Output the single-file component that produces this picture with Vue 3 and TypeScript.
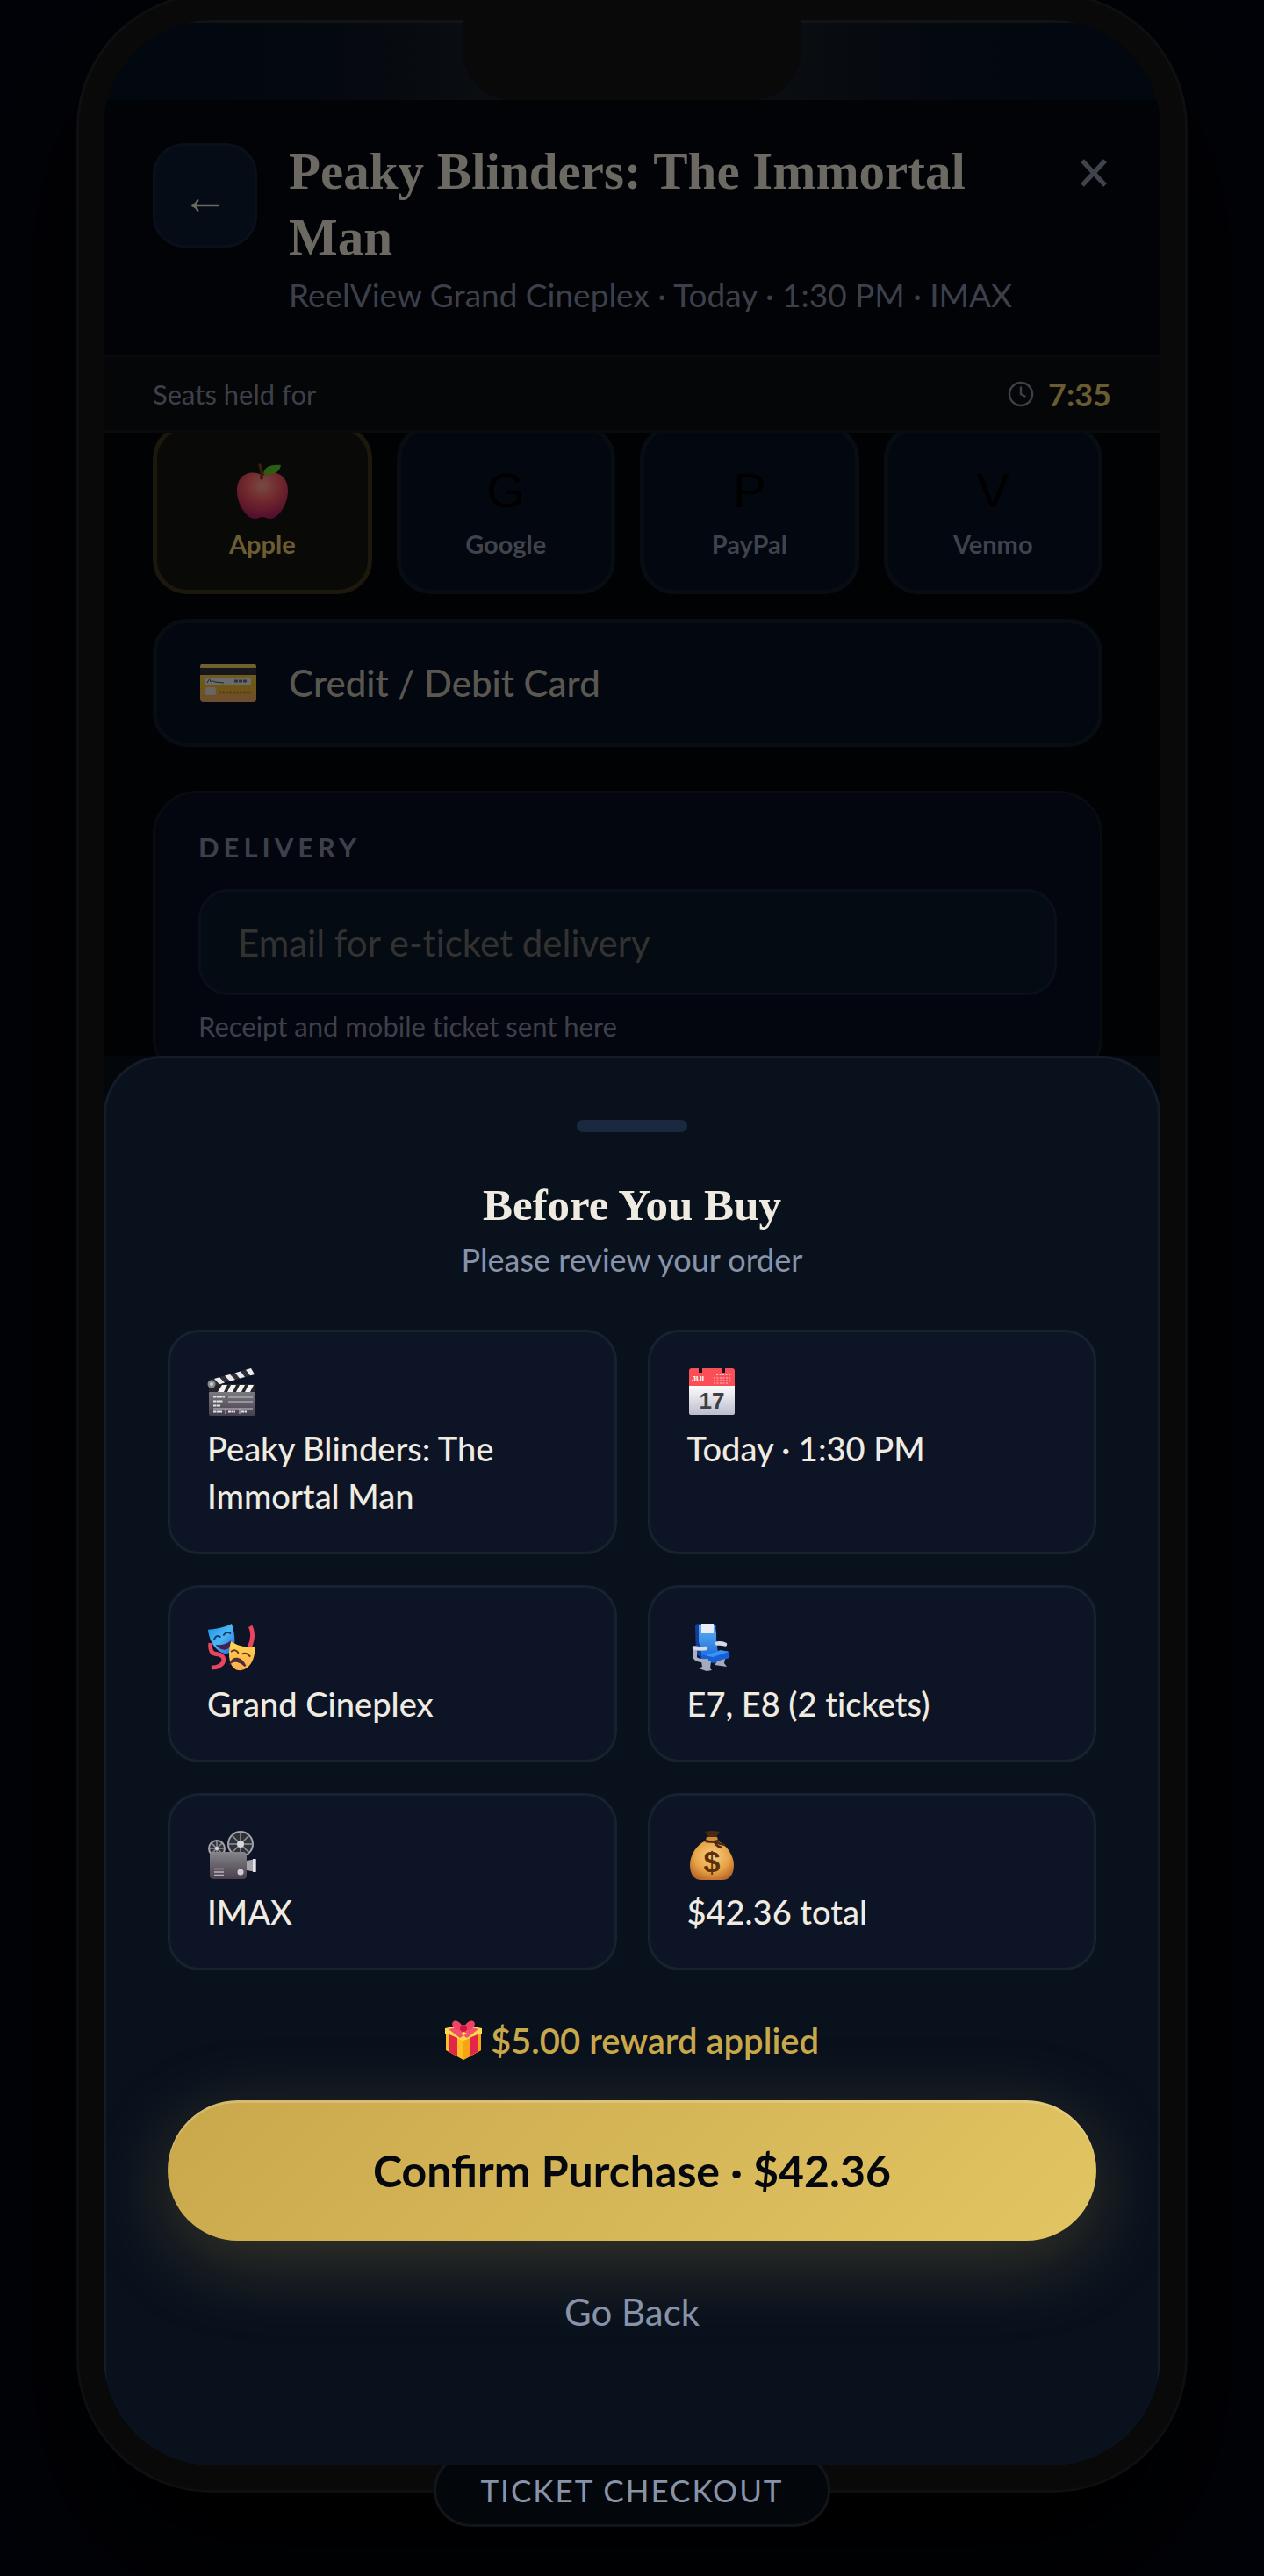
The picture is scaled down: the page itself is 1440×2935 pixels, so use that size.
<script setup lang="ts">
import { ref } from 'vue'

interface PayMethod {
  id: string
  label: string
  glyph: string
}

interface Detail {
  icon: string
  text: string
}

const methods: PayMethod[] = [
  { id: 'apple', label: 'Apple', glyph: '' },
  { id: 'google', label: 'Google', glyph: 'G' },
  { id: 'paypal', label: 'PayPal', glyph: 'P' },
  { id: 'venmo', label: 'Venmo', glyph: 'V' },
]

const details: Detail[] = [
  { icon: 'clapper', text: 'Peaky Blinders: The Immortal Man' },
  { icon: 'calendar', text: 'Today · 1:30 PM' },
  { icon: 'masks', text: 'Grand Cineplex' },
  { icon: 'seat', text: 'E7, E8 (2 tickets)' },
  { icon: 'projector', text: 'IMAX' },
  { icon: 'money', text: '$42.36 total' },
]

const selected = ref('apple')
const email = ref('')
</script>

<template>
  <main class="page">
    <div class="phone">
      <div class="screen">
        <div class="status"><div class="notch"></div></div>

        <header class="header">
          <button class="back" type="button" aria-label="Back">
            <svg viewBox="0 0 34 16" width="34" height="16" fill="none" stroke="currentColor" stroke-width="2.6">
              <path d="M2 8H33" />
              <path d="M8.500 1.500C7.500 5 4.500 7.300 1.500 8C4.500 8.700 7.500 11 8.500 14.500" />
            </svg>
          </button>
          <div class="heading">
            <h1>Peaky Blinders: The Immortal Man</h1>
            <p>ReelView Grand Cineplex · Today · 1:30 PM · IMAX</p>
          </div>
          <button class="close" type="button" aria-label="Close">
            <svg viewBox="0 0 36 34" width="36" height="34" fill="none" stroke="currentColor" stroke-width="5.500">
              <path d="M3 3L29 31M29 3L3 31" />
            </svg>
          </button>
        </header>

        <div class="timer">
          <span>Seats held for</span>
          <span class="clock">
            <svg viewBox="0 0 30 30" width="30" height="30" fill="none" stroke="currentColor" stroke-width="2.500" stroke-linecap="round">
              <circle cx="15" cy="15" r="13" />
              <path d="M15 7.500V15L19.500 17.500" />
            </svg>
            <strong>7:35</strong>
          </span>
        </div>

        <div class="scroller">
          <div class="content">
            <div class="methods">
              <button
                v-for="m in methods"
                :key="m.id"
                type="button"
                class="method"
                :class="{ active: selected === m.id }"
                @click="selected = m.id"
              >
                <span class="glyph">
                  <svg v-if="m.id === 'apple'" class="dim" viewBox="0 0 64 66" width="64" height="66">
                    <defs>
                      <radialGradient id="ap" cx=".5" cy=".28" r=".75">
                        <stop offset="0" stop-color="#ff9c88" />
                        <stop offset=".45" stop-color="#f0505c" />
                        <stop offset="1" stop-color="#a3105c" />
                      </radialGradient>
                    </defs>
                    <path d="M32 15C26 9 3 8 3 32C3 48 14 64 23 64C27 64 29 62 32 62C35 62 37 64 41 64C50 64 61 48 61 32C61 8 38 9 32 15Z" fill="url(#ap)" />
                    <path d="M29 3C31 8 32 12 31 18" stroke="#7a3418" stroke-width="3.500" fill="none" stroke-linecap="round" />
                    <path d="M33 13C34 4 43 2 53 3C52 11 43 16 33 13Z" fill="#58c322" />
                  </svg>
                  <template v-else>{{ m.glyph }}</template>
                </span>
                <span class="name">{{ m.label }}</span>
              </button>
            </div>

            <button type="button" class="card-row">
              <svg class="dim card-icon" viewBox="0 0 66 46" width="66" height="46">
                <defs>
                  <linearGradient id="cc" x1="0" y1="0" x2="0" y2="1">
                    <stop offset="0" stop-color="#f5cf58" />
                    <stop offset=".55" stop-color="#f0b81c" />
                    <stop offset="1" stop-color="#f0a060" />
                  </linearGradient>
                </defs>
                <rect x="1" y="1" width="64" height="44" rx="4" fill="url(#cc)" />
                <rect x="1" y="6" width="64" height="8" fill="#2c2c30" />
                <rect x="7" y="17" width="52" height="8" fill="#e8e4da" />
                <path d="M9 23C12 17 12 19 13 22C15 20 16 21 18 22L28 23" stroke="#444" stroke-width="1" fill="none" />
                <path d="M40 21H55" stroke="#666" stroke-width="3" stroke-dasharray="4 1" />
                <rect x="7" y="28" width="12" height="9" rx="2" fill="#e8d8c0" />
                <path d="M22 34H59" stroke="#c98a10" stroke-width="3" stroke-dasharray="3 1" />
              </svg>
              <span>Credit / Debit Card</span>
            </button>

            <section class="delivery">
              <label class="caps" for="email">DELIVERY</label>
              <input id="email" v-model="email" type="email" placeholder="Email for e-ticket delivery" />
              <p>Receipt and mobile ticket sent here</p>
            </section>
          </div>
        </div>

        <section class="sheet" role="dialog" aria-labelledby="sheet-title">
          <div class="handle"></div>
          <h2 id="sheet-title">Before You Buy</h2>
          <p class="lead">Please review your order</p>

          <ul class="details">
            <li v-for="d in details" :key="d.icon">
              <svg v-if="d.icon === 'clapper'" viewBox="0 0 56 56" width="56" height="56">
                <defs>
                  <linearGradient id="cl" x1="0" y1="0" x2="0" y2="1">
                    <stop offset="0" stop-color="#7b7b80" />
                    <stop offset="1" stop-color="#473f4e" />
                  </linearGradient>
                </defs>
                <rect x="2" y="27" width="53" height="28" rx="2" fill="url(#cl)" />
                <path d="M2 19H55V28H2Z" fill="#26262a" />
                <path d="M12 28L17 20H23L19 28ZM23 28L27 20H33L29 28ZM33 28L37 20H43L39 28ZM43 28L47 20H53L49 28Z" fill="#f4f4f6" />
                <path d="M1 15L50 1L54 8L4 22Z" fill="#303034" />
                <path d="M8 13L14 11.300L20 17.500L14 19.200ZM20 9.600L26 8L32 14L26 15.800ZM32 6.200L38 4.500L43 11L37 12.600ZM44 2.800L50 1L54 8L49 9.300Z" fill="#ececf0" />
                <circle cx="5" cy="19" r="4.500" fill="#8a8a92" />
                <circle cx="5" cy="19" r="2" fill="#d0d0d6" />
                <path d="M24 34H52M24 39H52M7 47H52M21 47V53M37 47V53" stroke="#c9c9cf" stroke-width="1" fill="none" />
                <path d="M7 33.500H20M7 38.500H18M7 43.500H15M7 50.500H17M24 50.500H32M39 50.500H45" stroke="#e4e4e8" stroke-width="2" stroke-dasharray="3 .5" />
              </svg>

              <svg v-else-if="d.icon === 'calendar'" viewBox="0 0 56 56" width="56" height="56">
                <defs>
                  <linearGradient id="ca" x1="0" y1="0" x2="0" y2="1">
                    <stop offset="0" stop-color="#ffffff" />
                    <stop offset="1" stop-color="#bcbccd" />
                  </linearGradient>
                </defs>
                <path d="M2 20H54V52Q54 54 52 54H4Q2 54 2 52Z" fill="url(#ca)" />
                <path d="M2 21V4Q2 1 5 1H13V6H17V1H39V6H43V1H51Q54 1 54 4V21Z" fill="#fb4f57" />
                <text x="5" y="16" font-size="9" font-weight="700" fill="#fff">JUL</text>
                <path d="M33 8.500H51M30 12H51M30 15H51M30 18H46" stroke="#ffc4c6" stroke-width="1.200" stroke-dasharray="2 1.500" />
                <text x="28" y="47" font-size="26" font-weight="700" fill="#3f3f43" text-anchor="middle">17</text>
              </svg>

              <svg v-else-if="d.icon === 'masks'" viewBox="0 0 56 58" width="56" height="58">
                <defs>
                  <linearGradient id="mb" x1="0" y1="0" x2="1" y2="1">
                    <stop offset="0" stop-color="#1b8fe6" />
                    <stop offset=".5" stop-color="#4bb8f5" />
                    <stop offset="1" stop-color="#2d5fd0" />
                  </linearGradient>
                  <linearGradient id="my" x1="0" y1="0" x2="0" y2="1">
                    <stop offset="0" stop-color="#ffd94f" />
                    <stop offset="1" stop-color="#ffab50" />
                  </linearGradient>
                </defs>
                <path d="M50 4C54 12 53 20 49 29M3 24C2 32 4 37 11 37C22 38 22 52 4 53" stroke="#ea4560" stroke-width="5" fill="none" />
                <path d="M0 8C12 7 20 5 28 1C31 11 33 22 30 30C27 36 22 38 16 35C6 30 1 18 0 8Z" fill="url(#mb)" />
                <path d="M7 20Q10 13 15 17M18 15Q22 9 27 13" stroke="#183868" stroke-width="2" fill="none" />
                <path d="M9 26Q20 27 27 21C28 34 15 35 9 26Z" fill="#3c2550" />
                <path d="M27 22C36 28 46 29 56 28C55 39 53 50 43 55C36 58 29 55 26 46C24 38 25 30 27 22Z" fill="url(#my)" />
                <path d="M27 34Q33 30 36 36M40 37Q45 34 50 40" stroke="#653a18" stroke-width="2" fill="none" />
                <path d="M27 47C30 40 39 40 44 51C38 45 31 44 27 47Z" fill="#4d2c38" stroke="#4d2c38" stroke-width="2" />
              </svg>

              <svg v-else-if="d.icon === 'seat'" viewBox="0 0 56 56" width="56" height="56">
                <defs>
                  <linearGradient id="se" x1="0" y1="0" x2="0" y2="1">
                    <stop offset="0" stop-color="#60b4f2" />
                    <stop offset="1" stop-color="#1e6ee0" />
                  </linearGradient>
                </defs>
                <path d="M9 4Q9 1 13 1H29Q33 1 33 5V12L34 35L20 42L10 36Z" fill="#173c96" />
                <path d="M13 2H29Q33 2 32 7L33 12L33 20L35 34L16 38Q16 28 13 22Z" fill="url(#se)" />
                <path d="M16 1H30V12H16Z" fill="#e9edf5" />
                <path d="M17 38L33 32L46 32Q49 36 48 40L30 46L16 43Q14 40 17 38Z" fill="#1560d6" />
                <path d="M20 37L38 31L47 33L29 39Z" fill="#3a93f3" />
                <path d="M9 30V40Q12 44 24 43" stroke="#aab0c4" stroke-width="4" fill="none" />
                <path d="M8 28.500Q14 30 21 29M34 23.500Q39 23 43 24.500" stroke="#d6dae6" stroke-width="4.500" fill="none" stroke-linecap="round" />
                <path d="M16 44H27L26 52L28 54L22 55L13 52L17 50ZM34 44L43 41L42 46L45 50L31 48Z" fill="#a6abb9" />
              </svg>

              <svg v-else-if="d.icon === 'projector'" viewBox="0 0 56 56" width="56" height="56">
                <defs>
                  <linearGradient id="pr" x1="0" y1="0" x2="0" y2="1">
                    <stop offset="0" stop-color="#85858b" />
                    <stop offset="1" stop-color="#493f4c" />
                  </linearGradient>
                </defs>
                <g fill="#30323a" stroke="#a6a7ae" stroke-width="2">
                  <circle cx="11" cy="20" r="9" />
                  <circle cx="38" cy="15" r="14" />
                </g>
                <path d="M11 11V29M2 20H20M5 14L17 26M17 14L5 26M38 1V29M24 15H52M28 5L48 25M48 5L28 25" stroke="#90919a" stroke-width="1.500" />
                <circle cx="38" cy="15" r="4" fill="#d7d7de" />
                <circle cx="11" cy="20" r="2" fill="#d7d7de" />
                <rect x="3" y="24" width="42" height="31" rx="4" fill="url(#pr)" />
                <path d="M45 34L56 32V47L45 45Z" fill="#a5a5ae" />
                <path d="M53 32V47" stroke="#e4e4ea" stroke-width="2" />
                <path d="M8 43.500H19M8 47H19M8 50.500H19" stroke="#b7b3bd" stroke-width="1.500" />
                <circle cx="38" cy="47" r="3.500" fill="#d2ccd8" />
              </svg>

              <svg v-else viewBox="0 0 56 56" width="56" height="56">
                <defs>
                  <radialGradient id="mo" cx=".5" cy=".4" r=".65">
                    <stop offset="0" stop-color="#f8cf88" />
                    <stop offset=".6" stop-color="#e8a445" />
                    <stop offset="1" stop-color="#b7662a" />
                  </radialGradient>
                </defs>
                <path d="M21 11C10 16 3 28 3 39C3 50 8 56 16 56H40C48 56 53 50 53 39C53 28 45 16 34 11Z" fill="url(#mo)" />
                <path d="M20 1Q28 -1 37 1L33 7H24Z" fill="#4a2a10" />
                <path d="M22 7H34L36 14H20Z" fill="#d18c3c" />
                <path d="M20 11Q28 14 36 11M32 12Q36 15 43 16M31 13Q35 19 40 19" stroke="#4a2a10" stroke-width="2.500" fill="none" />
                <text x="28" y="47" font-size="34" font-weight="700" fill="#5c3008" text-anchor="middle">$</text>
              </svg>

              <span>{{ d.text }}</span>
            </li>
          </ul>

          <p class="reward">
            <svg viewBox="0 0 42 46" width="42" height="46">
              <path d="M1 11L21 18L41 11V34L21 45L1 34Z" fill="#ffc125" />
              <path d="M21 18L41 11V34L21 45Z" fill="#f5a516" />
              <path d="M0 9L21 5L42 9V15L21 23L0 15Z" fill="#ffd94c" />
              <path d="M5 16L14 20V41L5 36ZM28 20L37 16V36L28 41Z" fill="#e3264a" />
              <path d="M4 10L13 8L25 15L17 20ZM38 10L30 8L18 15L25 20Z" fill="#f4506c" />
              <path d="M21 11C8 12 6 3 10 1C15 -1 20 5 21 11C22 5 27 -1 32 1C36 3 34 12 21 11Z" fill="#ef4265" />
              <circle cx="21" cy="9" r="4" fill="#c91842" />
            </svg>
            <span>$5.00 reward applied</span>
          </p>

          <button type="button" class="confirm">Confirm Purchase · $42.36</button>
          <button type="button" class="go-back">Go Back</button>
        </section>
      </div>
    </div>
    <div class="tag">TICKET CHECKOUT</div>
  </main>
</template>

<style>
body {
  margin: 0;
  background: #020308;
}
</style>

<style scoped>
* {
  box-sizing: border-box;
}

.page {
  --sans: Lato, "Liberation Sans", sans-serif;
  --serif: "Liberation Serif", serif;
  display: flow-root;
  min-height: 100vh;
  padding: 0 90px 56px;
  overflow: hidden;
  background: #020308;
  font-family: var(--sans);
  font-variant-ligatures: none;
  color: #f0ebe0;
}

h1,
h2,
p,
ul {
  margin: 0;
  padding: 0;
}

button {
  padding: 0;
  border: 0;
  background: none;
  color: inherit;
  font-family: inherit;
  cursor: pointer;
}

svg {
  display: block;
  flex: none;
}

.phone {
  margin-top: -5px;
  border: 28px solid #090909;
  border-radius: 151px;
  background: #090909;
  box-shadow: 0 0 0 3px #0e0f11, 0 80px 160px 20px #000;
}

.screen {
  position: relative;
  z-index: 2;
  display: flex;
  flex-direction: column;
  overflow: hidden;
  border-radius: 123px;
  background: #03070c;
}

.status {
  display: flex;
  justify-content: center;
  height: 91px;
  border-top: 3px solid #111416;
  background: linear-gradient(90deg, #020810, #04080f 20%, #0a0e12 36%, #0a0e12 64%, #04080f 80%, #020810);
}

.notch {
  width: 386px;
  margin-top: -3px;
  border-radius: 0 0 56px 56px;
  background: #090909;
}

.header {
  display: flex;
  align-items: flex-start;
  padding: 44px 56px 40px;
  border-bottom: 3px solid #090b0f;
  background: #020307;
}

.back {
  display: flex;
  align-items: center;
  justify-content: center;
  flex: none;
  width: 119px;
  height: 119px;
  margin: 5px 36px 0 0;
  padding-top: 22px;
  border: 3px solid #0a101b;
  border-radius: 36px;
  background: #050c15;
  color: #6b6962;
}

.heading {
  flex: 1;
}

h1 {
  color: #6b6962;
  font: 700 59px/75px var(--serif);
}

.heading p {
  color: #3d404a;
  font-size: 37px;
  line-height: 56px;
  white-space: nowrap;
}

.close {
  margin-top: 22px;
  color: #3f434c;
}

.timer {
  display: flex;
  align-items: center;
  justify-content: space-between;
  height: 86px;
  padding: 0 56px;
  border-bottom: 3px solid #080a0c;
  background: #050607;
  color: #3d404a;
  font-size: 31px;
}

.clock {
  display: flex;
  align-items: center;
  gap: 16px;
}

.clock strong {
  color: #6a5c32;
  font-size: 36px;
}

.scroller {
  overflow: hidden;
  background: #010204;
}

.content {
  margin: -9px 66px -29px 56px;
}

.methods {
  display: grid;
  grid-template-columns: repeat(4, 1fr);
  gap: 28px;
}

.method {
  display: flex;
  flex-direction: column;
  align-items: center;
  height: 193px;
  padding-top: 38px;
  border: 5px solid #080d14;
  border-radius: 39px;
  background: #03070f;
  color: #3f434c;
}

.method.active {
  border-color: #1d180c;
  background: #090907;
  color: #6b5c33;
}

.glyph {
  height: 72px;
  color: #000;
  font: 56px/64px "Liberation Sans", sans-serif;
}

.dim {
  opacity: 0.45;
}

.name {
  margin-top: 3px;
  font-size: 29px;
  font-weight: 700;
  line-height: 36px;
}

.card-row {
  display: flex;
  align-items: center;
  gap: 36px;
  width: 100%;
  height: 146px;
  margin-top: 28px;
  padding: 0 48px;
  border: 5px solid #080d14;
  border-radius: 39px;
  background: #03070f;
  color: #5a5751;
  font-size: 42px;
  font-weight: 500;
}

.delivery {
  margin-top: 50px;
  padding: 41px 49px 40px;
  border: 3px solid #080c11;
  border-radius: 50px;
  background: #03060e;
  color: #3d404a;
}

.caps {
  display: block;
  font-size: 31px;
  font-weight: 700;
  letter-spacing: 5px;
  line-height: 40px;
}

input {
  display: block;
  width: 100%;
  height: 121px;
  margin: 28px 0 15px;
  padding: 0 42px;
  border: 3px solid #0a0f19;
  border-radius: 34px;
  outline: 0;
  background: #050b13;
  color: #6b6962;
  font: 42px var(--sans);
  font-variant-ligatures: none;
}

input::placeholder {
  color: #323231;
  opacity: 1;
}

.delivery p {
  font-size: 31px;
  line-height: 40px;
}

.sheet {
  display: flex;
  flex-direction: column;
  align-items: center;
  padding: 70px 70px 147px;
  border: 3px solid #151c29;
  border-bottom: 0;
  border-radius: 67px 67px 0 0;
  background: #09111d;
}

.handle {
  width: 126px;
  height: 14px;
  border-radius: 7px;
  background: #1b2940;
}

h2 {
  margin-top: 49px;
  font: 700 51px/68px var(--serif);
}

.lead {
  margin-top: 3px;
  color: #8892a8;
  font-size: 36px;
  line-height: 50px;
}

.details {
  display: grid;
  grid-template-columns: 1fr 1fr;
  gap: 35px;
  width: 100%;
  margin-top: 55px;
  list-style: none;
}

.details li {
  display: flex;
  flex-direction: column;
  padding: 40px 42px 37px;
  border: 3px solid #182130;
  border-radius: 36px;
  background: #0c1425;
  font-size: 38px;
  font-weight: 500;
  line-height: 54px;
}

.details svg {
  height: 56px;
  margin-bottom: 9px;
  font-family: "Liberation Sans", sans-serif;
}

.reward {
  display: flex;
  align-items: center;
  gap: 10px;
  margin-top: 53px;
  color: #c9a84c;
  font-size: 40px;
  font-weight: 600;
  line-height: 54px;
}

.confirm {
  width: 100%;
  height: 160px;
  margin-top: 41px;
  border-radius: 80px;
  background: linear-gradient(135deg, #c9a84c, #e2c563);
  box-shadow: 0 22px 90px rgba(201, 168, 76, 0.25), inset 0 3px 0 rgba(255, 255, 255, 0.2);
  color: #05080f;
  font-size: 50px;
  font-weight: 700;
}

.go-back {
  margin-top: 53px;
  color: #8892a8;
  font-size: 42px;
  line-height: 56px;
}

.tag {
  position: relative;
  z-index: 1;
  width: fit-content;
  margin: -42px auto 0;
  padding: 0 50px;
  border: 3px solid #121519;
  border-radius: 42px;
  background: #03060b;
  color: #8892a8;
  font-size: 35px;
  letter-spacing: 2px;
  line-height: 78px;
}
</style>
